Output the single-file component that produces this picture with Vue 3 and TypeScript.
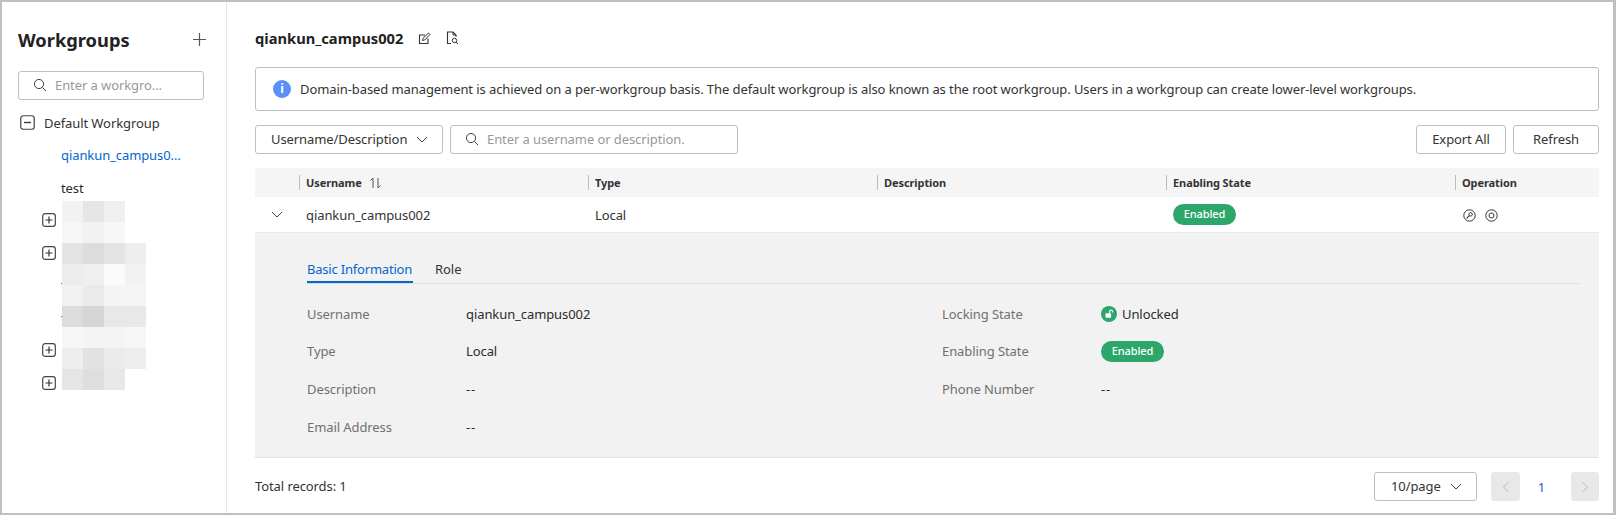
<script setup lang="ts">
const mosaic: string[][] = [
  ['#f2f2f2', '#e6e6e6', '#efefef', '#ffffff'],
  ['#f6f6f6', '#f2f2f2', '#f7f7f7', '#ffffff'],
  ['#e3e3e3', '#dcdcdc', '#e4e4e4', '#eeeeee'],
  ['#ececec', '#efefef', '#fafafa', '#f2f2f2'],
  ['#f1f1f1', '#eaeaea', '#f4f4f4', '#f5f5f5'],
  ['#dcdcdc', '#d5d5d5', '#e8e8e8', '#e8e8e8'],
  ['#f6f6f6', '#f4f4f4', '#f4f4f4', '#f6f6f6'],
  ['#eeeeee', '#e2e2e2', '#ebebeb', '#eeeeee'],
  ['#e5e5e5', '#dedede', '#e8e8e8', '#ffffff'],
]
const cells = mosaic.flat()
const treeSpacers = [true, true, false, false, true, true]
const columns = ['Username', 'Type', 'Description', 'Enabling State', 'Operation']
</script>

<template>
  <div class="frame">
    <aside class="side">
      <div class="side-head">
        <h1>Workgroups</h1>
        <svg class="add" width="15" height="15" viewBox="0 0 15 15"><path d="M7.5 1v13M1 7.5h13" stroke="#555" stroke-width="1.2" fill="none" /></svg>
      </div>
      <div class="side-search">
        <svg width="14" height="14" viewBox="0 0 14 14"><circle cx="6" cy="6" r="4.6" stroke="#444" fill="none" /><path d="M9.4 9.4 13 13" stroke="#444" fill="none" /></svg>
        <span>Enter a workgro...</span>
      </div>
      <div class="tree">
        <div class="tree-row root">
          <svg width="15" height="15" viewBox="0 0 15 15"><rect x=".75" y=".75" width="13.5" height="13.5" rx="2.5" stroke="#444" stroke-width="1.2" fill="none" /><path d="M4 7.5h7" stroke="#333" stroke-width="1.3" /></svg>
          <span>Default Workgroup</span>
        </div>
        <div class="tree-row leaf active">qiankun_campus0...</div>
        <div class="tree-row leaf">test</div>
        <div v-for="(hasIcon, i) in treeSpacers" :key="i" class="tree-row" :class="hasIcon ? 'branch' : 'leaf'">
          <svg v-if="hasIcon" width="14" height="14" viewBox="0 0 14 14"><rect x=".7" y=".7" width="12.6" height="12.6" rx="2.4" stroke="#444" stroke-width="1.2" fill="none" /><path d="M3.5 7h7M7 3.5v7" stroke="#333" stroke-width="1.2" /></svg>
          <span v-else>test</span>
        </div>
        <div class="mosaic">
          <i v-for="(c, i) in cells" :key="i" :style="{ background: c }"></i>
        </div>
      </div>
    </aside>

    <main class="main">
      <div class="title">
        <h2>qiankun_campus002</h2>
        <svg width="13" height="13" viewBox="0 0 13 13"><path d="M10 6.5V11.5H1.5V3H7" stroke="#333" stroke-width="1.1" fill="none" /><path d="M4.5 8.5 5 6.3 10.5 1 12 2.5 6.7 8z" stroke="#333" fill="none" /></svg>
        <svg width="13" height="14" viewBox="0 0 13 14"><path d="M5 12.5H1.5V1h5.5L10 4v2" stroke="#333" stroke-width="1.1" fill="none" /><path d="M7 1v3h3" stroke="#333" fill="none" /><circle cx="8.5" cy="9.5" r="2.2" stroke="#333" fill="none" /><path d="M10 11.2 12 13" stroke="#333" fill="none" /></svg>
      </div>

      <div class="notice">
        <span class="info-dot">i</span>
        <span>Domain-based management is achieved on a per-workgroup basis. The default workgroup is also known as the root workgroup. Users in a workgroup can create lower-level workgroups.</span>
      </div>

      <div class="toolbar">
        <div class="box select">
          <span>Username/Description</span>
          <svg width="12" height="7" viewBox="0 0 12 7"><path d="M1 1l5 5 5-5" stroke="#444" fill="none" /></svg>
        </div>
        <div class="box search">
          <svg width="14" height="14" viewBox="0 0 14 14"><circle cx="6" cy="6" r="4.6" stroke="#444" fill="none" /><path d="M9.4 9.4 13 13" stroke="#444" fill="none" /></svg>
          <span>Enter a username or description.</span>
        </div>
        <div class="actions">
          <button class="box btn export">Export All</button>
          <button class="box btn refresh">Refresh</button>
        </div>
      </div>

      <div class="grid head">
        <div></div>
        <div v-for="(c, i) in columns" :key="c" class="th">
          <span>{{ c }}</span>
          <svg v-if="i === 0" width="13" height="12" viewBox="0 0 13 12"><path d="M4 11V1L1.5 3.5M9 1v10l2.5-2.5" stroke="#555" fill="none" /></svg>
        </div>
      </div>

      <div class="grid row">
        <div class="chev"><svg width="12" height="7" viewBox="0 0 12 7"><path d="M1 1l5 5 5-5" stroke="#444" fill="none" /></svg></div>
        <div class="td">qiankun_campus002</div>
        <div class="td">Local</div>
        <div class="td"></div>
        <div class="td"><span class="pill">Enabled</span></div>
        <div class="td ops">
          <svg width="13" height="13" viewBox="0 0 13 13"><circle cx="6.5" cy="6.5" r="5.7" stroke="#333" fill="none" /><circle cx="7.6" cy="5.4" r="1.7" stroke="#333" fill="none" /><path d="M6.3 6.7 3.6 9.4" stroke="#333" stroke-width="1.1" /></svg>
          <svg width="13" height="13" viewBox="0 0 13 13"><circle cx="6.5" cy="6.5" r="5.7" stroke="#333" fill="none" /><rect x="4.2" y="4.2" width="4.6" height="4.6" rx="1.6" stroke="#333" fill="none" /></svg>
        </div>
      </div>

      <section class="detail">
        <div class="tabs">
          <span class="tab on">Basic Information</span>
          <span class="tab">Role</span>
        </div>
        <div class="fields">
          <div class="field"><label>Username</label><span>qiankun_campus002</span></div>
          <div class="field">
            <label>Locking State</label>
            <span class="lock">
              <svg width="16" height="16" viewBox="0 0 16 16"><circle cx="8" cy="8" r="8" fill="#2ca66a" /><rect x="4.5" y="7.3" width="5.6" height="4.4" rx=".6" fill="#fff" /><path d="M8.6 7.3V5.6a1.5 1.5 0 0 1 3 0v.8" stroke="#fff" stroke-width="1.1" fill="none" /></svg>
              Unlocked
            </span>
          </div>
          <div class="field"><label>Type</label><span>Local</span></div>
          <div class="field"><label>Enabling State</label><span class="pill">Enabled</span></div>
          <div class="field"><label>Description</label><span class="dash">--</span></div>
          <div class="field"><label>Phone Number</label><span class="dash">--</span></div>
          <div class="field"><label>Email Address</label><span class="dash">--</span></div>
        </div>
      </section>

      <div class="footer">
        <span>Total records: 1</span>
        <div class="pager">
          <div class="box size">
            <span>10/page</span>
            <svg width="12" height="7" viewBox="0 0 12 7"><path d="M1 1l5 5 5-5" stroke="#444" fill="none" /></svg>
          </div>
          <span class="nav"><svg width="8" height="12" viewBox="0 0 8 12"><path d="M6.5 1 1.5 6l5 5" stroke="#bbb" fill="none" /></svg></span>
          <span class="num">1</span>
          <span class="nav last"><svg width="8" height="12" viewBox="0 0 8 12"><path d="M1.5 1l5 5-5 5" stroke="#bbb" fill="none" /></svg></span>
        </div>
      </div>
    </main>
  </div>
</template>

<style>
html, body { margin: 0; background: #fff; }
</style>

<style scoped>
.frame {
  box-sizing: border-box;
  width: 1616px;
  height: 515px;
  border: 2px solid #bfbfbf;
  border-right-width: 3px;
  display: flex;
  overflow: hidden;
  font-family: "Noto Sans", "Open Sans", sans-serif;
  font-size: 13px;
  letter-spacing: -0.085px;
  color: #2b2b2b;
  background: #fff;
}
svg { display: block; flex: none; }
.side {
  box-sizing: border-box;
  width: 225px;
  flex: none;
  border-right: 1px solid #e8e8e8;
  padding: 0 18px 0 16px;
}
.side-head {
  height: 69px;
  box-sizing: border-box;
  padding-top: 25px;
  display: flex;
  justify-content: space-between;
}
.side-head h1 { margin: 0; font-size: 18.3px; line-height: 26px; font-weight: 700; color: #222; letter-spacing: 0; }
.add { margin: 5px 1px 0 0; }
.side-search {
  box-sizing: border-box;
  width: 186px;
  height: 29px;
  border: 1px solid #bfbfbf;
  border-radius: 3px;
  display: flex;
  align-items: center;
  gap: 8px;
  padding: 0 0 1px 14px;
  color: #999;
}
.tree { position: relative; margin: 6.5px 0 0 -16px; width: 224px; }
.tree-row { height: 32.5px; display: flex; align-items: center; white-space: nowrap; }
.root { padding-left: 18px; gap: 9px; color: #333; }
.leaf { padding-left: 59px; }
.active { color: #0067d1; }
.branch { padding-left: 40px; }
.mosaic {
  position: absolute;
  left: 60px;
  top: 94.5px;
  display: grid;
  grid-template-columns: repeat(4, 21px);
  grid-auto-rows: 21px;
}
.main { flex: 1; min-width: 0; padding: 0 14px 0 28px; }
.title { height: 65px; box-sizing: border-box; display: flex; align-items: center; padding-top: 7px; }
.title h2 { margin: 0 15px 0 0; font-size: 14.7px; font-weight: 700; color: #222; letter-spacing: 0; }
.title svg + svg { margin-left: 15px; }
.notice {
  box-sizing: border-box;
  height: 44px;
  border: 1px solid #bfbfbf;
  border-radius: 3px;
  display: flex;
  align-items: center;
  gap: 9px;
  padding-left: 17px;
  color: #333;
  white-space: nowrap;
}
.info-dot {
  width: 18px;
  height: 18px;
  border-radius: 50%;
  background: #5b8ff9;
  color: #fff;
  font-size: 12px;
  font-weight: 700;
  line-height: 18px;
  text-align: center;
  flex: none;
}
.toolbar { display: flex; gap: 7px; margin-top: 14px; height: 29px; }
.box {
  box-sizing: border-box;
  height: 29px;
  border: 1px solid #bfbfbf;
  border-radius: 3px;
  background: #fff;
  display: flex;
  align-items: center;
  padding-bottom: 1px;
}
.select { width: 188px; padding-left: 15px; gap: 9px; color: #333; }
.search { width: 288px; padding-left: 14px; gap: 8px; color: #999; }
.actions { margin-left: auto; display: flex; gap: 7px; }
.btn { font: inherit; letter-spacing: inherit; color: #333; justify-content: center; padding: 0 0 1px; }
.export { width: 90px; }
.refresh { width: 86px; }
.grid { display: grid; grid-template-columns: 44px 289px 289px 289px 289px 1fr; }
.head { margin-top: 14px; height: 29px; background: #f5f5f5; align-items: center; }
.th {
  height: 15px;
  border-left: 1px solid #bbb;
  padding-left: 6px;
  display: flex;
  align-items: center;
  gap: 7px;
  font-size: 11px;
  font-weight: 700;
  color: #333;
}
.row { height: 36px; align-items: center; border-bottom: 1px solid #e8e8e8; box-sizing: border-box; }
.chev { padding-left: 16px; }
.td { padding-left: 7px; color: #333; display: flex; align-items: center; }
.ops { gap: 9px; padding: 2px 0 0 8px; }
.pill {
  display: inline-block;
  width: 63px;
  height: 21px;
  line-height: 20px;
  border-radius: 11px;
  background: #2ca66a;
  color: #fff;
  font-size: 11px;
  font-weight: 500;
  text-align: center;
}
.detail { height: 225px; box-sizing: border-box; background: #f2f2f2; border-bottom: 1px solid #e4e4e4; padding: 23px 20px 0 52px; }
.tabs { display: flex; gap: 22px; height: 27px; border-bottom: 1px solid #dcdcdc; color: #333; }
.tab { height: 27px; box-sizing: border-box; line-height: 26px; }
.on { color: #0067d1; border-bottom: 2px solid #0067d1; padding-right: 1px; letter-spacing: -0.2px; }
.fields { display: grid; grid-template-columns: 635px 1fr; grid-auto-rows: 37.6px; margin-top: 11px; }
.field { display: flex; align-items: center; }
.field label { width: 159px; color: #707070; flex: none; }
.lock { display: flex; align-items: center; gap: 5px; }
.dash { letter-spacing: 0.8px; }
.footer {
  height: 56px;
  box-sizing: border-box;
  padding-top: 14px;
  display: flex;
  justify-content: space-between;
  align-items: flex-start;
  color: #333;
}
.footer > span { line-height: 29px; }
.pager { display: flex; align-items: center; }
.size { width: 103px; padding-left: 16px; gap: 9px; margin-right: 14px; }
.nav {
  width: 29px;
  height: 29px;
  border-radius: 3px;
  background: #e8e8e8;
  display: flex;
  align-items: center;
  justify-content: center;
}
.last { width: 28px; }
.num { box-sizing: border-box; width: 51px; padding-right: 8px; text-align: center; color: #0067d1; }
</style>
